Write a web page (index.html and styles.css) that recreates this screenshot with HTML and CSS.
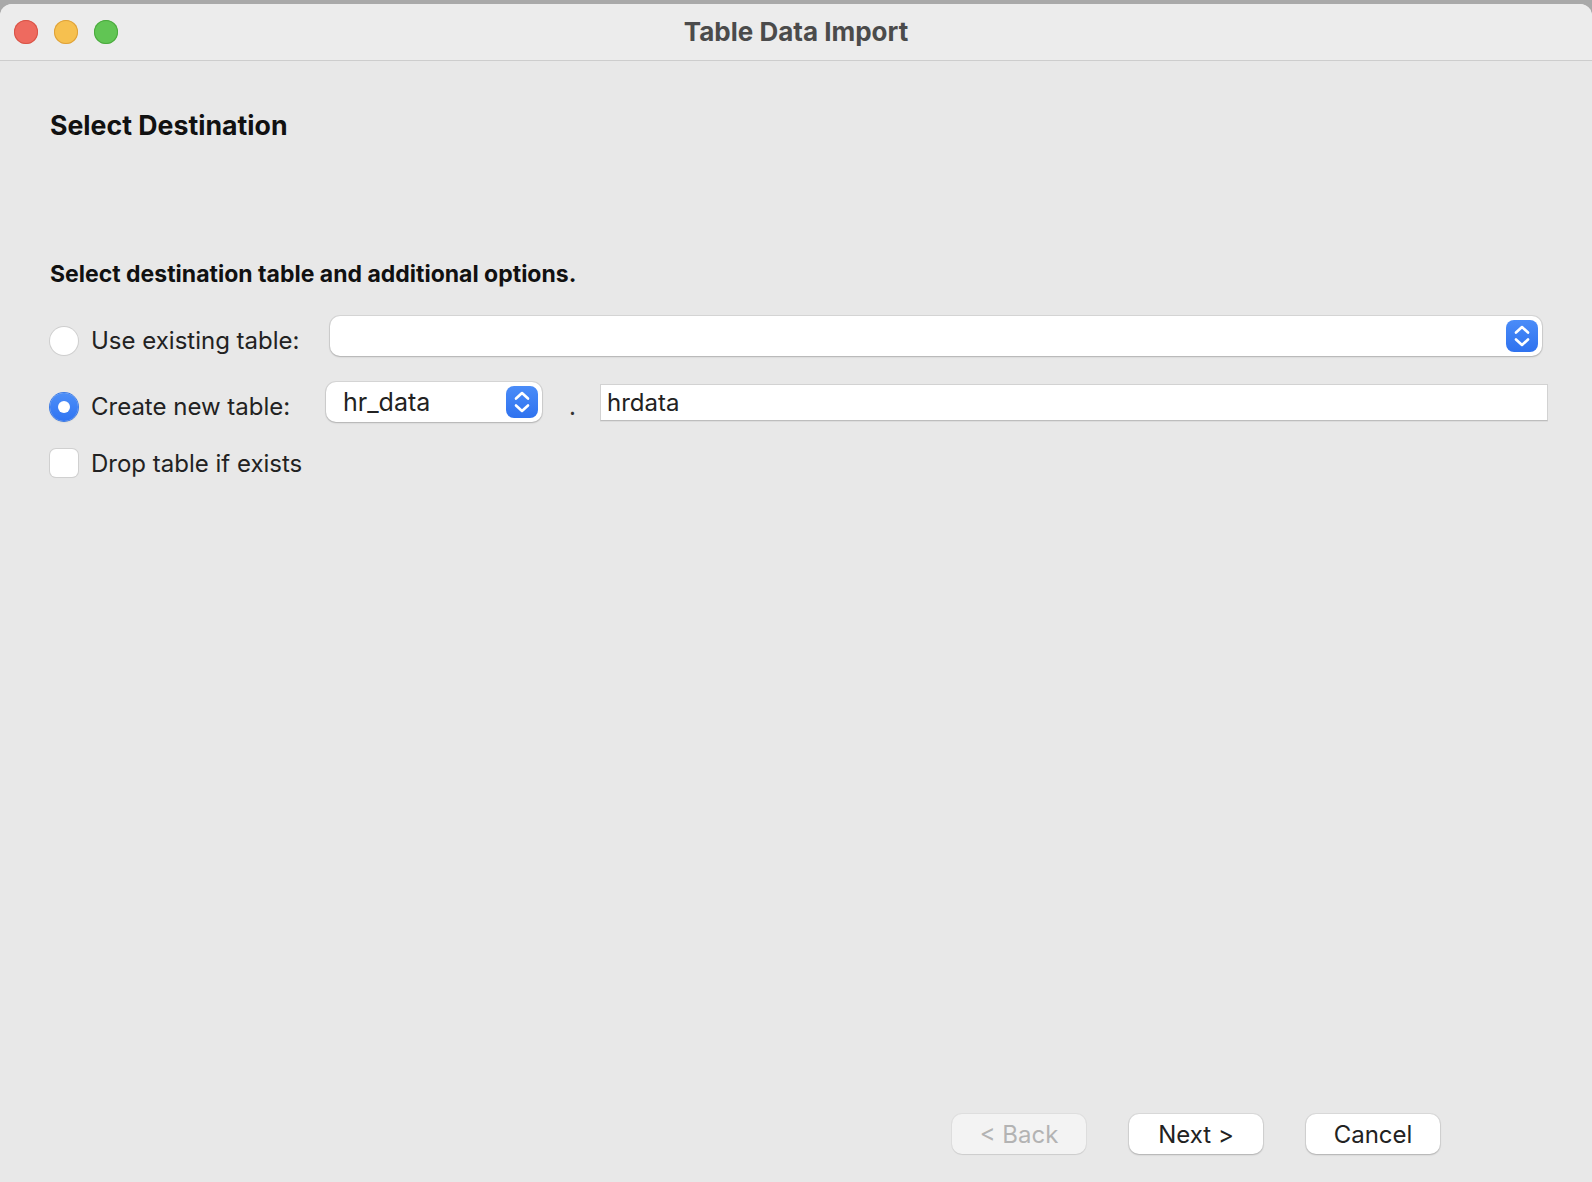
FILE: index.html
```html
<!DOCTYPE html>
<html>
<head>
<meta charset="utf-8">
<title>Table Data Import</title>
<link rel="stylesheet" href="styles.css">
</head>
<body>
<div class="window">
  <header class="titlebar">
    <div class="lights">
      <span class="light red"></span>
      <span class="light yellow"></span>
      <span class="light green"></span>
    </div>
    <div class="title">Table Data Import</div>
    <div class="spacer"></div>
  </header>
  <main class="content">
    <h1 class="heading">Select Destination</h1>
    <h2 class="subheading">Select destination table and additional options.</h2>

    <div class="row row-existing">
      <span class="radio"></span>
      <span class="label label-wide">Use existing table:</span>
      <div class="combo combo-wide">
        <span class="combo-text"></span>
        <span class="stepper">
          <svg width="32" height="32" viewBox="0 0 32 32"><path d="M10 12.5 L16 7 L22 12.5 M10 19.5 L16 25 L22 19.5" fill="none" stroke="#fff" stroke-width="2.6" stroke-linecap="round" stroke-linejoin="round"/></svg>
        </span>
      </div>
    </div>

    <div class="row row-new">
      <span class="radio checked"></span>
      <span class="label label-wide">Create new table:</span>
      <div class="combo combo-schema">
        <span class="combo-text">hr_data</span>
        <span class="stepper">
          <svg width="32" height="32" viewBox="0 0 32 32"><path d="M10 12.5 L16 7 L22 12.5 M10 19.5 L16 25 L22 19.5" fill="none" stroke="#fff" stroke-width="2.6" stroke-linecap="round" stroke-linejoin="round"/></svg>
        </span>
      </div>
      <span class="dot">.</span>
      <div class="field">hrdata</div>
    </div>

    <div class="row row-drop">
      <span class="checkbox"></span>
      <span class="label label-drop">Drop table if exists</span>
    </div>
  </main>
  <footer class="buttons">
    <button class="btn disabled">&lt; Back</button>
    <button class="btn">Next &gt;</button>
    <button class="btn">Cancel</button>
  </footer>
</div>
</body>
</html>
```

FILE: styles.css
```css
* { box-sizing: border-box; }
html, body { margin: 0; padding: 0; }
body {
  background: #a9a9a9;
  font-family: "Inter", "Noto Sans", sans-serif;
  width: 1592px;
  height: 1182px;
  overflow: hidden;
  padding-top: 4px;
}
.window {
  height: 1178px;
  background: #e8e8e8;
  border-radius: 12px 12px 0 0;
  overflow: hidden;
  display: flex;
  flex-direction: column;
}
.titlebar {
  height: 57px;
  background: #ececec;
  border-bottom: 1px solid #cdcdcd;
  display: grid;
  grid-template-columns: 1fr auto 1fr;
  align-items: center;
  flex: none;
}
.lights {
  display: flex;
  gap: 16px;
  padding-left: 14px;
}
.light {
  width: 24px;
  height: 24px;
  border-radius: 50%;
  display: block;
}
.red { background: #ee6a5f; box-shadow: inset 0 0 0 1px #d85447; }
.yellow { background: #f6c04f; box-shadow: inset 0 0 0 1px #dea13a; }
.green { background: #61c554; box-shadow: inset 0 0 0 1px #4ba93e; }
.title {
  font-size: 26px;
  font-weight: 700;
  color: #4b4b4b;
  position: relative;
  top: -1px;
}
.content {
  flex: 1;
  padding: 47px 0 0 50px;
}
.heading {
  margin: 0;
  font-size: 26.7px;
  line-height: 34px;
  font-weight: 700;
  color: #111;
}
.subheading {
  margin: 117px 0 0 0;
  font-size: 23px;
  line-height: 30px;
  font-weight: 700;
  color: #111;
}
.row {
  display: flex;
  align-items: center;
  height: 40px;
}
.row-existing { margin-top: 27px; }
.row-new { margin-top: 26px; }
.row-drop { margin-top: 27px; height: 28px; }
.radio {
  width: 28px;
  height: 28px;
  border-radius: 50%;
  background: #fff;
  box-shadow: 0 0 0 1px #cfcfcf, 0 1px 1px rgba(0,0,0,0.08);
  flex: none;
  position: relative;
  top: 5px;
}
.radio.checked {
  background: linear-gradient(#4d8ff8, #2f74f2);
  box-shadow: 0 0 0 1px #3a7ae6, 0 1px 2px rgba(0,0,0,0.15);
}
.radio.checked::after {
  content: "";
  position: absolute;
  left: 8px;
  top: 8px;
  width: 12px;
  height: 12px;
  border-radius: 50%;
  background: #fff;
}
.checkbox {
  width: 28px;
  height: 28px;
  border-radius: 6px;
  background: #fff;
  box-shadow: 0 0 0 1px #d0d0d0, 0 1px 1px rgba(0,0,0,0.06);
  flex: none;
}
.label {
  margin-left: 13px;
  font-size: 24px;
  color: #222;
  position: relative;
  top: 4px;
}
.label-drop { top: 0; }
.label-wide { width: 235px; flex: none; }
.combo {
  height: 40px;
  background: #fff;
  border-radius: 10px;
  box-shadow: 0 0 0 1px rgba(0,0,0,0.08), 0 1px 2px rgba(0,0,0,0.18);
  display: flex;
  align-items: center;
  justify-content: space-between;
  padding: 0 4px 0 17px;
  flex: none;
}
.combo-wide { width: 1212px; margin-left: 4px; }
.combo-schema { width: 216px; }
.combo-text {
  font-size: 25px;
  color: #222;
}
.stepper {
  width: 32px;
  height: 32px;
  border-radius: 8px;
  background: linear-gradient(#4a8cf8, #2f72ef);
  display: block;
}
.stepper svg { display: block; }
.dot {
  font-size: 24px;
  color: #333;
  margin-left: 27px;
  width: 31px;
  position: relative;
  top: 4px;
}
.field {
  width: 948px;
  height: 37px;
  background: #fff;
  border: 1px solid #d2d2d2;
  border-bottom-color: #bdbdbd;
  box-shadow: 0 1px 0 rgba(0,0,0,0.05);
  font-size: 24px;
  color: #222;
  padding: 0 6px;
  line-height: 35px;
  position: relative;
  top: 0;
}
.buttons {
  display: flex;
  justify-content: flex-end;
  gap: 43px;
  padding: 0 152px 28px 0;
  flex: none;
}
.btn {
  width: 134px;
  height: 40px;
  border: none;
  border-radius: 10px;
  background: #fff;
  box-shadow: 0 0 0 1px rgba(0,0,0,0.06), 0 1px 2px rgba(0,0,0,0.2);
  font-family: "Inter", "Noto Sans", sans-serif;
  font-size: 24px;
  color: #222;
  padding: 0;
}
.btn.disabled {
  background: #f3f3f3;
  color: #b3b3b3;
  box-shadow: 0 0 0 1px rgba(0,0,0,0.04), 0 1px 1px rgba(0,0,0,0.08);
}
```
